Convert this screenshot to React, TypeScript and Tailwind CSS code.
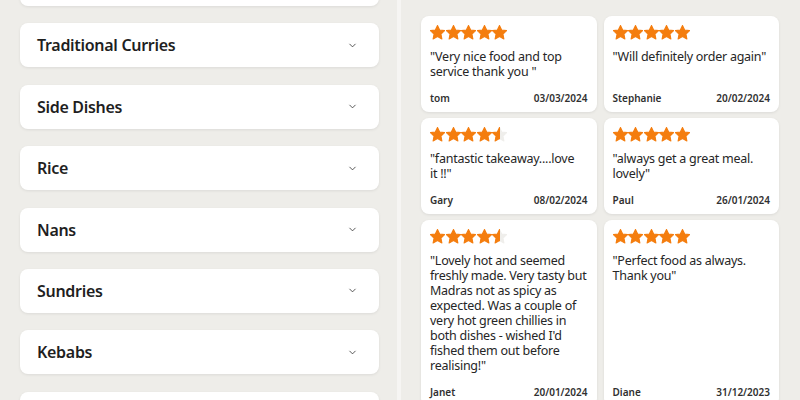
import React from 'react';
import { ChevronDown } from 'lucide-react';

interface Review {
  rating: number;
  text: string;
  name: string;
  date: string;
}

const categories = ['Starters', 'Traditional Curries', 'Side Dishes', 'Rice', 'Nans', 'Sundries', 'Kebabs', 'Drinks'];

const reviews: Review[] = [
  { rating: 5, text: '"Very nice food and top service thank you  "', name: 'tom', date: '03/03/2024' },
  { rating: 5, text: '"Will definitely order again"', name: 'Stephanie', date: '20/02/2024' },
  { rating: 4.5, text: '"fantastic takeaway....love it\u00a0!!"', name: 'Gary', date: '08/02/2024' },
  { rating: 5, text: '"always get a great meal. lovely"', name: 'Paul', date: '26/01/2024' },
  {
    rating: 4.5,
    text: '"Lovely hot and seemed freshly made. Very tasty but Madras not as spicy as expected. Was a couple of very hot green chillies in both dishes - wished I\'d fished them out before realising!"',
    name: 'Janet',
    date: '20/01/2024',
  },
  { rating: 5, text: '"Perfect food as always. Thank you"', name: 'Diane', date: '31/12/2023' },
];

const STAR = 'M12 2.6l2.9 6.1 6.6.8-4.9 4.6 1.3 6.6L12 17.4l-5.9 3.3 1.3-6.6-4.9-4.6 6.6-.8z';

const Star = ({ fill, id }: { fill: number; id: string }) => (
  <svg width="15" height="15" viewBox="2 2 20 20" className="block">
    <defs>
      <linearGradient id={id} x1="0" x2="1" y1="0" y2="0">
        <stop offset={fill} stopColor="#f47d0e" />
        <stop offset={fill} stopColor="#efeeeb" />
      </linearGradient>
    </defs>
    <path d={STAR} fill={`url(#${id})`} stroke={`url(#${id})`} strokeWidth="1.4" strokeLinejoin="round" />
  </svg>
);

const Stars = ({ rating, idx }: { rating: number; idx: number }) => (
  <div className="flex h-[15px] gap-[0.5px]">
    {[0, 1, 2, 3, 4].map((i) => (
      <Star key={i} id={`s-${idx}-${i}`} fill={Math.max(0, Math.min(1, rating - i))} />
    ))}
  </div>
);

export default function App() {
  return (
    <div
      className="flex h-[400px] w-[800px] overflow-hidden bg-[#eeede9] text-[#262626]"
      style={{ fontFamily: '"Noto Sans", "Open Sans", sans-serif' }}
    >
      {/* Menu categories */}
      <div className="w-[397px] shrink-0 px-[20px]">
        <div className="-mt-[38px] flex flex-col gap-[17.4px]">
          {categories.map((c) => (
            <div
              key={c}
              className="flex h-[44px] w-[359px] items-center justify-between rounded-lg bg-white pl-[17px] pr-[21px] shadow-[0_1px_3px_rgba(0,0,0,0.08)]"
            >
              <span className="text-[16px] font-semibold tracking-[-0.3px] text-[#1f1f1f]">{c}</span>
              <ChevronDown size={11} strokeWidth={1.7} className="text-[#2a2a2a]" />
            </div>
          ))}
        </div>
      </div>

      <div className="w-[4px] shrink-0 bg-[#f6f5f3]" />

      {/* Reviews */}
      <div className="flex-1 pl-[20px] pr-[21px] pt-[16px]">
        <div className="grid grid-cols-2 gap-x-[7px] gap-y-[6px]">
          {reviews.map((r, i) => (
            <div
              key={i}
              className="flex flex-col rounded-lg bg-white px-[9px] pb-[9px] pt-[9px] shadow-[0_1px_3px_rgba(0,0,0,0.08)]"
            >
              <Stars rating={r.rating} idx={i} />
              <p className="mt-[9px] text-[12.5px] leading-[15px] tracking-[-0.25px] text-[#262626]">{r.text}</p>
              <div className="mt-auto flex items-center justify-between pt-[14px] text-[10px] font-semibold leading-[10px] text-[#303030]">
                <span>{r.name}</span>
                <span>{r.date}</span>
              </div>
            </div>
          ))}
        </div>
      </div>
    </div>
  );
}
